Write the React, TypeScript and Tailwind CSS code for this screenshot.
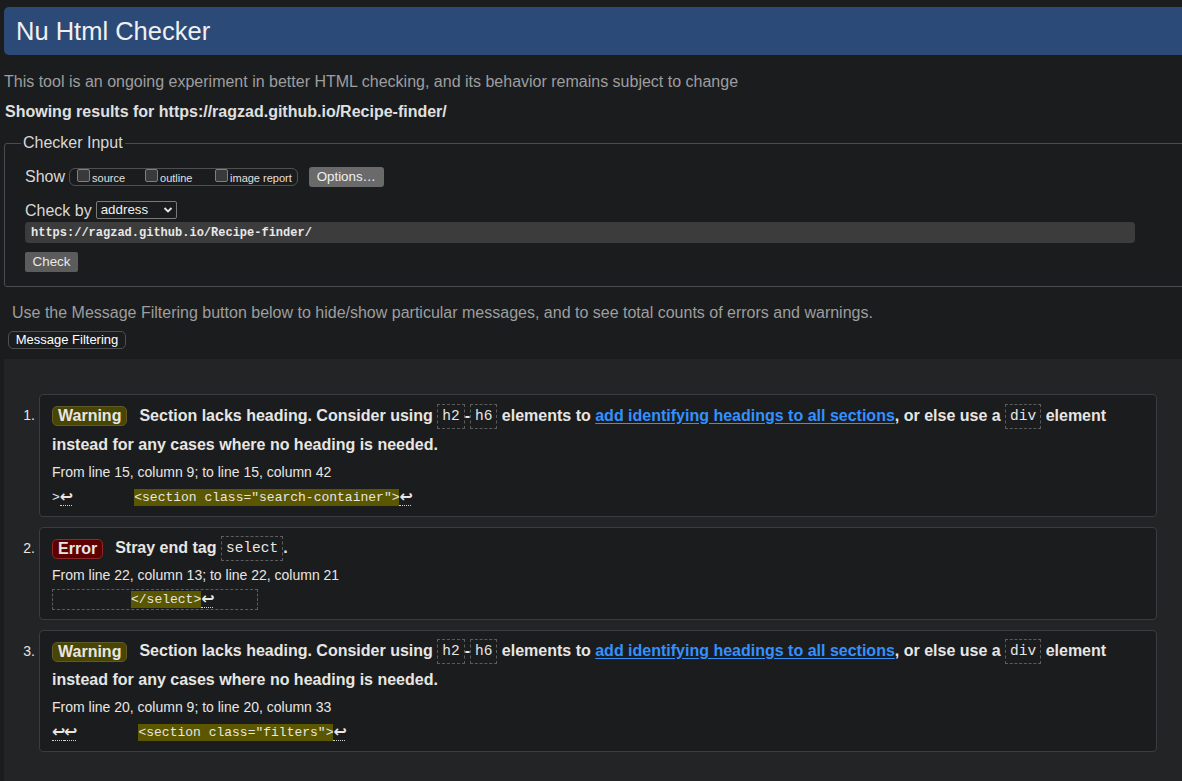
import React from "react";

const Arrow = ({ dotted = true }: { dotted?: boolean }) => (
  <span
    className={
      "inline-block align-top w-[12px] h-[17px] text-center font-['DejaVu_Sans',sans-serif] font-bold text-[16px] leading-[16px] text-[#e8e6e3] " +
      (dotted ? "border-b border-dotted border-[#d0d0d0]" : "")
    }
  >
    ↩
  </span>
);

const Hl = ({ children }: { children: React.ReactNode }) => (
  <mark className="inline-block align-top h-[17px] leading-[17px] bg-[#5a5700] text-[#e8e6e3] px-0">{children}</mark>
);

const Code = ({ children }: { children: React.ReactNode }) => (
  <code className="inline-block align-middle border border-dashed border-[#5c5c5c] px-[4px] font-['Liberation_Mono',monospace] text-[14.5px] leading-[23px] font-normal text-[#e8e6e3]">
    {children}
  </code>
);

const Badge = ({ kind }: { kind: "Warning" | "Error" }) => (
  <span
    className={
      "inline-block align-middle h-[20px] leading-[18px] border rounded-[5px] mr-[12px] px-[5px] " +
      (kind === "Warning" ? "bg-[#4a4500] border-[#5e5a2c]" : "bg-[#5e0000] border-[#8a2a2a]")
    }
  >
    {kind}
  </span>
);

const Link = () => (
  <a className="text-[#3391ff] underline underline-offset-[2px] cursor-pointer">
    add identifying headings to all sections
  </a>
);

const SectionMsg = () => (
  <>
    Section lacks heading. Consider using <Code>h2</Code>-<Code>h6</Code> elements to <Link />, or else use a{" "}
    <Code>div</Code> element instead for any cases where no heading is needed.
  </>
);

const Item = ({ n, children }: { n: number; children: React.ReactNode }) => (
  <div className="flex mb-[10px]">
    <div className="w-[35px] pr-[4px] text-right text-[14px] leading-[20px] pt-[11px] text-[#e8e6e3]">{n}.</div>
    <div className="w-[1118px] border border-[#3a3d40] rounded-[4px] bg-[#1b1c1e] px-[12px]">{children}</div>
  </div>
);

export default function App() {
  return (
    <div className="min-h-[781px] bg-[#1b1c1e] text-[#e8e6e3] overflow-hidden pl-1 pt-[7px] font-['Liberation_Sans',Arial,sans-serif]">
      <div className="-mr-2">
        <div className="h-[48px] bg-[#2c4a78] rounded-l-[5px] flex items-center pl-3 text-[25.5px] text-[#f0f0f0]">
          Nu Html Checker
        </div>
        <p className="mt-[18px] text-[16px] leading-[18px] text-[#9e9e9e]">
          This tool is an ongoing experiment in better HTML checking, and its behavior remains subject to change
        </p>
        <p className="mt-[12px] text-[16px] leading-[18px] font-bold text-[#e0e0e0] pl-px">
          Showing results for https://ragzad.github.io/Recipe-finder/
        </p>
        <fieldset className="mt-[13px] border border-[#4a4d50] rounded-[3px] pl-5 pb-[14px]">
          <legend className="-ml-[4px] px-[2px] text-[16px] leading-[18px] text-[#d8d8d8]">Checker Input</legend>
          <div className="mt-[15px] flex items-center h-[20px]">
            <span className="text-[16px] text-[#d8d8d8]">Show</span>
            <div className="ml-[4px] h-[18px] border border-[#505050] rounded-[6px] pl-[7px] flex items-center text-[11px] text-[#e0e0e0]">
              <label className="flex items-center w-[68px]">
                <span className="w-[13px] h-[13px] rounded-[2px] border border-[#808080] bg-[#3a3a3a] mr-[2px] -mt-[3px]" />
                <span className="mt-[2px]">source</span>
              </label>
              <label className="flex items-center w-[70px]">
                <span className="w-[13px] h-[13px] rounded-[2px] border border-[#808080] bg-[#3a3a3a] mr-[2px] -mt-[3px]" />
                <span className="mt-[2px]">outline</span>
              </label>
              <label className="flex items-center pr-[5px]">
                <span className="w-[13px] h-[13px] rounded-[2px] border border-[#808080] bg-[#3a3a3a] mr-[2px] -mt-[3px]" />
                <span className="mt-[2px]">image report</span>
              </label>
            </div>
            <button className="ml-[11px] w-[75px] h-[20px] bg-[#6a6a6a] rounded-[3px] text-[13.33px] text-[#f0f0f0]">
              Options…
            </button>
          </div>
          <div className="mt-[14px] flex items-center h-[18px]">
            <span className="text-[16px] text-[#d8d8d8] mt-[2px]">Check by</span>
            <div className="ml-[4px] w-[81px] h-[18px] border border-[#7a7a7a] rounded-[2px] bg-[#1b1c1e] flex items-center pl-[4px] pr-[3px] justify-between text-[13.33px] text-[#f0f0f0]">
              <span>address</span>
              <svg width="10" height="8" viewBox="0 0 10 8">
                <path d="M1.5 2 L5 5.5 L8.5 2" fill="none" stroke="#e8e8e8" strokeWidth="1.8" />
              </svg>
            </div>
          </div>
          <div className="mt-[3px] w-[1110px] h-[21px] bg-[#3c3c3c] rounded-[4px] pl-[6px] flex items-center font-['Liberation_Mono',monospace] font-bold text-[12px] text-[#e8e8e8]">
            https://ragzad.github.io/Recipe-finder/
          </div>
          <button className="mt-[9px] w-[53px] h-[20px] bg-[#5c5c5c] rounded-[2px] text-[13.33px] text-[#e8e8e8] block">
            Check
          </button>
        </fieldset>
        <p className="mt-[17px] pl-[8px] text-[16px] leading-[18px] text-[#9e9e9e]">
          Use the Message Filtering button below to hide/show particular messages, and to see total counts of errors and warnings.
        </p>
        <button className="mt-[9px] ml-[4px] w-[118px] h-[18px] border border-[#4e4e4e] rounded-[5px] bg-[#1b1c1e] text-[13px] leading-[16px] text-white">
          Message Filtering
        </button>
        <div className="mt-[8px] bg-[#222426] pt-[35px] pb-[30px] min-h-[430px]">
          <Item n={1}>
            <p className="pt-[5.5px] text-[16px] leading-[29px] font-bold">
              <Badge kind="Warning" />
              <SectionMsg />
            </p>
            <p className="mt-[3px] text-[14px] leading-[20px]">From line 15, column 9; to line 15, column 42</p>
            <div className="mt-[6px] pb-[8px] h-[28px] pt-[1px] font-['Liberation_Mono',monospace] text-[13px] leading-[17px] whitespace-pre">
              {">"}
              <Arrow />
              {"        "}
              <Hl>{'<section class="search-container">'}</Hl>
              <Arrow />
            </div>
          </Item>
          <Item n={2}>
            <p className="pt-[5.5px] text-[16px] leading-[29px] font-bold">
              <Badge kind="Error" />
              Stray end tag <Code>select</Code>.
            </p>
            <p className="mt-[3px] text-[14px] leading-[20px]">From line 22, column 13; to line 22, column 21</p>
            <div className="mt-[4px] pb-[8.5px]">
              <div className="w-[206px] h-[21px] border border-dashed border-[#5c5c5c] pt-[1px] font-['Liberation_Mono',monospace] text-[13px] leading-[17px] whitespace-pre">
                {"          "}
                <Hl>{"</select>"}</Hl>
                <Arrow />
              </div>
            </div>
          </Item>
          <Item n={3}>
            <p className="pt-[5.5px] text-[16px] leading-[29px] font-bold">
              <Badge kind="Warning" />
              <SectionMsg />
            </p>
            <p className="mt-[3px] text-[14px] leading-[20px]">From line 20, column 9; to line 20, column 33</p>
            <div className="mt-[6px] pb-[8px] h-[28px] pt-[1px] font-['Liberation_Mono',monospace] text-[13px] leading-[17px] whitespace-pre">
              <Arrow />
              <Arrow />
              {"        "}
              <Hl>{'<section class="filters">'}</Hl>
              <Arrow />
            </div>
          </Item>
        </div>
      </div>
    </div>
  );
}
